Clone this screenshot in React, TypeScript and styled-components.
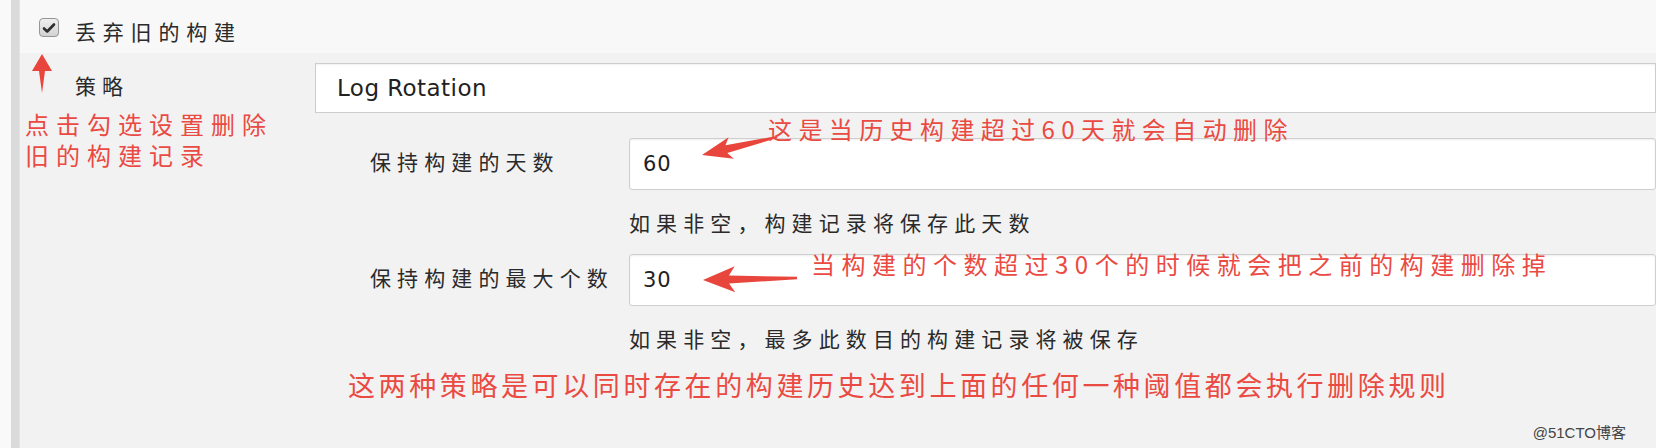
import styled, { createGlobalStyle } from "styled-components";

const GlobalStyle = createGlobalStyle`
  html, body {
    margin: 0;
    padding: 0;
    background: #ffffff;
  }
  body {
    width: 1662px;
    height: 448px;
    overflow: hidden;
    font-family: "Noto Sans CJK SC", "DejaVu Sans", sans-serif;
  }
`;

const cjk = `"Noto Sans CJK SC", "Noto Sans", sans-serif`;

const Page = styled.div`
  position: relative;
  display: flex;
  width: 1662px;
  height: 448px;
`;

const Gutter = styled.div`
  width: 11px;
  background: #f9f9f9;
`;

const Rail = styled.div`
  width: 9px;
  background: #dadada;
  border-right: 1px solid #e4e4e4;
  box-sizing: border-box;
`;

const RightEdge = styled.div`
  width: 6px;
  background: #ffffff;
`;

const Panel = styled.div`
  flex: 1;
  display: flex;
  flex-direction: column;
`;

const Header = styled.div`
  height: 53px;
  box-sizing: border-box;
  background: #f8f8f8;
  display: flex;
  align-items: flex-start;
  gap: 16px;
  padding: 16px 0 0 19px;
`;

const CheckBox = styled.span`
  width: 20px;
  height: 19px;
  margin-top: 2px;
  box-sizing: border-box;
  border: 1px solid #969696;
  border-radius: 4px;
  background: linear-gradient(#efefef, #d2d2d2);
  display: flex;
  align-items: center;
  justify-content: center;
`;

const GreyText = styled.div<{ $spacing?: number }>`
  font-family: ${cjk};
  font-size: 21px;
  letter-spacing: ${(p) => p.$spacing ?? 6.1}px;
  line-height: 30px;
  color: #2a2a2a;
  white-space: nowrap;
`;

const Body = styled.div`
  flex: 1;
  background: #f2f2f2;
  display: flex;
  padding-top: 10px;
`;

const LeftCol = styled.div`
  width: 295px;
  display: flex;
  flex-direction: column;
`;

const StrategyLabel = styled(GreyText)`
  margin: 7px 0 0 55px;
`;

const RedNote = styled.div<{ $size: number; $spacing: number; $line: number }>`
  font-family: ${cjk};
  font-size: ${(p) => p.$size}px;
  letter-spacing: ${(p) => p.$spacing}px;
  line-height: ${(p) => p.$line}px;
  color: #ea4a42;
  white-space: nowrap;
`;

const SideNote = styled(RedNote)`
  margin: 8px 0 0 5px;
`;

const RightCol = styled.div`
  flex: 1;
  display: flex;
  flex-direction: column;
`;

const Select = styled.div`
  height: 50px;
  box-sizing: border-box;
  background: #ffffff;
  border: 1px solid #cdcdcd;
  box-shadow: inset 0 1px 2px rgba(0, 0, 0, 0.06);
  padding-left: 21px;
  display: flex;
  align-items: center;
  font-family: "DejaVu Sans", sans-serif;
  font-size: 23px;
  letter-spacing: 0.45px;
  color: #222222;
`;

const Fields = styled.div`
  margin-top: 25px;
  padding-left: 55px;
  display: grid;
  grid-template-columns: 259px 1fr;
  align-items: center;
`;

const FieldLabel = styled(GreyText)`
  padding-bottom: 6px;
`;

const Input = styled.div`
  height: 52px;
  box-sizing: border-box;
  background: #ffffff;
  border: 1px solid #cfcfcf;
  border-radius: 3px;
  box-shadow: inset 0 1px 2px rgba(0, 0, 0, 0.07);
  padding-left: 13px;
  display: flex;
  align-items: center;
  font-family: "DejaVu Sans", sans-serif;
  font-size: 21px;
  letter-spacing: 1px;
  color: #222222;
`;

const Help = styled(GreyText)`
  grid-column: 2;
  margin: 17px 0;
`;

const BottomNote = styled(RedNote)`
  margin: -1px 0 0 33px;
`;

const Overlay = styled.svg`
  position: absolute;
  left: 0;
  top: 0;
  pointer-events: none;
`;

const FloatingNote = styled(RedNote)<{ $x: number; $y: number }>`
  position: absolute;
  left: ${(p) => p.$x}px;
  top: ${(p) => p.$y}px;
`;

const Watermark = styled.div`
  position: absolute;
  right: 36px;
  bottom: 6px;
  font-family: "Liberation Sans", ${cjk};
  font-size: 15px;
  color: #444444;
`;

const App = () => {
  return (
    <>
      <GlobalStyle />
      <Page>
        <Gutter />
        <Rail />
        <Panel>
          <Header>
            <CheckBox>
              <svg width="14" height="12" viewBox="0 0 14 12">
                <path
                  d="M2 6.5 L5.2 9.5 L12 2.5"
                  fill="none"
                  stroke="#2e2e2e"
                  strokeWidth="2.6"
                  strokeLinecap="round"
                  strokeLinejoin="round"
                />
              </svg>
            </CheckBox>
            <GreyText $spacing={6.8}>丢弃旧的构建</GreyText>
          </Header>
          <Body>
            <LeftCol>
              <StrategyLabel>策略</StrategyLabel>
              <SideNote $size={24} $spacing={7} $line={31}>
                点击勾选设置删除
                <br />
                旧的构建记录
              </SideNote>
            </LeftCol>
            <RightCol>
              <Select>Log Rotation</Select>
              <Fields>
                <FieldLabel>保持构建的天数</FieldLabel>
                <Input>60</Input>
                <Help>如果非空，构建记录将保存此天数</Help>
                <FieldLabel>保持构建的最大个数</FieldLabel>
                <Input>30</Input>
                <Help>如果非空，最多此数目的构建记录将被保存</Help>
              </Fields>
              <BottomNote $size={27} $spacing={3.6} $line={32}>
                这两种策略是可以同时存在的构建历史达到上面的任何一种阈值都会执行删除规则
              </BottomNote>
            </RightCol>
          </Body>
        </Panel>
        <RightEdge />

        <Overlay width="1662" height="448" viewBox="0 0 1662 448">
          <polygon
            points="42,54 52,71 45,71 42,93 39,71 32,71"
            fill="#e8463c"
          />
          <polygon
            points="702,155 733.8,158.7 727.3,153.1 777.2,138 776.8,136 725.5,145.3 728.6,137.3"
            fill="#e8463c"
          />
          <polygon
            points="703,280 735.3,292.3 729.1,283.5 797,279.2 797,276.8 728.9,275.5 734.7,266.3"
            fill="#e8463c"
          />
        </Overlay>
        <FloatingNote $x={768} $y={113} $size={24} $spacing={6.4} $line={32}>
          这是当历史构建超过60天就会自动删除
        </FloatingNote>
        <FloatingNote $x={811} $y={248} $size={24} $spacing={6.5} $line={32}>
          当构建的个数超过30个的时候就会把之前的构建删除掉
        </FloatingNote>
        <Watermark>@51CTO博客</Watermark>
      </Page>
    </>
  );
};

export default App;
